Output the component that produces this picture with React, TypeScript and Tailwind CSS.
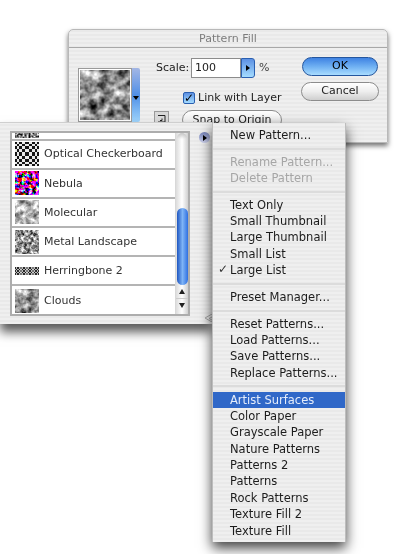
import React from "react";

const stripes = "bg-[repeating-linear-gradient(0deg,#efefef_0,#efefef_2px,#e9e9e9_2px,#e9e9e9_4px)]";

function Noise({ id, seed, freq, size = 24, dark = 0, bright = 1, color = false }: { id: string; seed: number; freq: number; size?: number; dark?: number; bright?: number; color?: boolean }) {
  const slope = bright - dark;
  const k = slope * 2.6;
  const o = dark - slope * 0.8;
  return (
    <svg width={size} height={size} className="block shrink-0">
      <filter id={id} x="0" y="0" width="100%" height="100%" colorInterpolationFilters="sRGB">
        <feTurbulence type="fractalNoise" baseFrequency={freq} numOctaves={3} seed={seed} />
        {color ? (
          <feColorMatrix type="matrix" values="5 0 0 0 -1.8  0 5 0 0 -2.5  0 0 5 0 -1.9  0 0 0 0 1" />
        ) : (
          <feColorMatrix type="matrix" values={`${k} 0 0 0 ${o} ${k} 0 0 0 ${o} ${k} 0 0 0 ${o} 0 0 0 0 1`} />
        )}
      </filter>
      <rect width={size} height={size} filter={`url(#${id})`} />
    </svg>
  );
}

function Checker() {
  const cells = [];
  const xs = [0, 2, 4, 7, 10, 14, 17, 20, 22, 24];
  for (let r = 0; r < 9; r++)
    for (let c = 0; c < 9; c++)
      if ((r + c) % 2 === 0)
        cells.push(<rect key={`${r}-${c}`} x={xs[c]} y={xs[r]} width={xs[c + 1] - xs[c]} height={xs[r + 1] - xs[r]} />);
  return (
    <svg width="24" height="24" className="block shrink-0 bg-[#e8e8e8]" fill="#151515">
      {cells}
    </svg>
  );
}

function Herring() {
  return (
    <svg width="24" height="24" className="block shrink-0">
      <defs>
        <pattern id="hb" width="3" height="3" patternUnits="userSpaceOnUse">
          <rect width="3" height="3" fill="#bbb" />
          <path d="M0 0L3 3M3 0L0 3" stroke="#1a1a1a" strokeWidth="0.9" />
        </pattern>
      </defs>
      <rect x="0" y="8" width="24" height="8" fill="url(#hb)" />
      <path d="M6 8V16M12 8V16M18 8V16" stroke="#eee" strokeWidth="0.8" />
    </svg>
  );
}

function Row({ thumb, label, last }: { thumb: React.ReactNode; label: string; last?: boolean }) {
  return (
    <div className={`flex h-[29.2px] shrink-0 items-center gap-[5px] pl-[3px] ${last ? "" : "border-b-2 border-[#b4b4b4]"}`}>
      {thumb}
      <span className="pt-[1px]">{label}</span>
    </div>
  );
}

function MenuItem({ label, disabled, checked, active }: { label: string; disabled?: boolean; checked?: boolean; active?: boolean }) {
  return (
    <div className={`relative flex h-[16.4px] items-center pl-[17px] pt-[1px] leading-none ${active ? "bg-[#3068c8] text-[#e4ecfa]" : disabled ? "text-[#a6a6a6]" : "text-[#1c1c1c]"}`}>
      {checked && <span className="absolute left-[5px] top-[1px] text-[12px] text-[#333]">✓</span>}
      {label}
    </div>
  );
}

function Sep() {
  return (
    <div className="flex h-[10.3px] items-center">
      <div className="h-[2px] w-full bg-[#dcdcdc]" />
    </div>
  );
}

export default function App() {
  return (
    <div className="relative h-[554px] w-[400px] overflow-hidden bg-white font-['DejaVu_Sans','Liberation_Sans',sans-serif] text-[11.5px] text-[#222] blur-[0.45px]">
      {/* Pattern Fill dialog */}
      <div className={`absolute left-[68px] top-[29px] h-[114px] w-[320px] rounded-t-[5px] border border-[#b8b8b8] text-[11px] ${stripes} shadow-[0_3px_5px_rgba(0,0,0,0.55)]`}>
        <div className="flex h-[18px] items-center justify-center border-b border-[#a8a8a8] pt-[1px] text-[#7c7c7c]">Pattern Fill</div>
        <div className="flex">
          <div className="ml-[9px] mt-[20px] flex h-[54px] items-stretch">
            <div className="border border-[#9a9a9a] bg-white p-[1px]">
              <Noise id="main" seed={8} freq={0.1} size={50} dark={0.25} bright={0.85} />
            </div>
            <div className="flex w-[8px] items-center justify-center rounded-r-[2px] bg-gradient-to-b from-[#a3b6e4] via-[#4f8fe6] to-[#9fd4fb]">
              <div className="mt-[6px] h-0 w-0 border-x-[3px] border-t-[4px] border-x-transparent border-t-black" />
            </div>
          </div>
          <div className="ml-[14px] mt-[10px] flex flex-col">
            <div className="flex h-[20px] items-center">
              <span className="ml-[2px] w-[35px]">Scale:</span>
              <div className="flex h-[20px] w-[50px] items-center border border-[#8c8c8c] bg-white pl-[3px]">100</div>
              <div className="flex h-[20px] w-[14px] items-center justify-center rounded-r-[3px] border border-[#2a5fb0] bg-gradient-to-b from-[#5d90e2] to-[#a5dcff]">
                <div className="h-0 w-0 border-y-[3px] border-l-[4px] border-y-transparent border-l-black" />
              </div>
              <span className="ml-[4px] text-[#444]">%</span>
            </div>
            <div className="ml-[29px] mt-[13px] flex h-[14px] items-center gap-[3px]">
              <div className="flex h-[12px] w-[12px] items-center justify-center rounded-[2px] border border-[#2a5fb0] bg-gradient-to-b from-[#5d90e2] to-[#a5dcff] text-[12px] font-bold leading-none text-black">✓</div>
              <span>Link with Layer</span>
            </div>
            <div className="mt-[2px] flex items-start">
              <div className="mt-[4px] flex h-[15px] w-[15px] items-center justify-center border border-[#999] bg-[#d8d8d8]">
                <svg width="9" height="9" viewBox="0 0 9 9" fill="none" stroke="#222" strokeWidth="1">
                  <path d="M1 1.5H8V8H1M5 4.5V6.5H3" />
                </svg>
              </div>
              <div className="ml-[13px] mt-[3px] flex h-[20px] w-[100px] items-center justify-center rounded-full border border-[#8c8c8c] bg-gradient-to-b from-white to-[#dcdcdc]">Snap to Origin</div>
            </div>
          </div>
          <div className="ml-[19px] mt-[9px] flex flex-col gap-[6px]">
            <div className="ml-[1px] flex h-[19px] w-[76px] items-center justify-center rounded-full border border-[#24569e] bg-gradient-to-b from-[#3f82e2] via-[#6fb0f2] to-[#a8dcff] text-black">OK</div>
            <div className="flex h-[19px] w-[78px] items-center justify-center rounded-full border border-[#8c8c8c] bg-gradient-to-b from-white via-[#eeeeee] to-[#cfcfcf]">Cancel</div>
          </div>
        </div>
      </div>

      {/* Pattern list palette */}
      <div className={`absolute left-0 top-[122px] flex h-[202px] w-[212px] items-start border-t border-[#cfcfcf] ${stripes} pl-[10px] pt-[8px] shadow-[0_8px_10px_rgba(0,0,0,0.65)]`}>
        <div className="flex h-[185px] w-[180px] border-2 border-[#adadad] bg-white text-[11px] text-[#333]">
          <div className="flex w-[165px] flex-col overflow-hidden">
            <div className="h-[7.5px] shrink-0 overflow-hidden border-b-2 border-[#b4b4b4]">
              <div className="-mt-[19px] pl-[3px]">
                <Noise id="t0" seed={3} freq={0.5} dark={0.1} bright={0.9} />
              </div>
            </div>
            <Row thumb={<Checker />} label="Optical Checkerboard" />
            <Row thumb={<Noise id="t1" seed={5} freq={0.28} color />} label="Nebula" />
            <Row thumb={<Noise id="t2" seed={11} freq={0.17} dark={0.45} bright={0.95} />} label="Molecular" />
            <Row thumb={<Noise id="t3" seed={21} freq={0.32} dark={0.25} bright={0.9} />} label="Metal Landscape" />
            <Row thumb={<Herring />} label="Herringbone 2" />
            <Row thumb={<Noise id="t4" seed={8} freq={0.15} dark={0.3} bright={0.85} />} label="Clouds" last />
          </div>
          <div className="flex w-[13px] flex-col border-l border-[#d8d8d8] bg-gradient-to-r from-[#dcdcdc] via-white to-[#d0d0d0]">
            <div className="h-[75px]">
              <div className="mx-[1px] h-[6px] rounded-t-full bg-gradient-to-b from-[#c4c4c4] to-transparent" />
            </div>
            <div className="mx-[0.5px] h-[77px] rounded-full bg-gradient-to-r from-[#1f55c0] via-[#7fb4f6] to-[#2f6fe0]" />
            <div className="flex h-[14px] items-center justify-center border-b border-[#ccc]">
              <div className="h-0 w-0 border-x-[3px] border-b-[5px] border-x-transparent border-b-[#222]" />
            </div>
            <div className="flex h-[13px] items-center justify-center">
              <div className="h-0 w-0 border-x-[3px] border-t-[5px] border-x-transparent border-t-[#222]" />
            </div>
          </div>
        </div>
        <div className="ml-[9px] mt-[1px] flex h-[11px] w-[11px] items-center justify-center rounded-full bg-gradient-to-b from-[#7683b8] to-[#d0d4ee]">
          <div className="h-0 w-0 border-y-[3px] border-l-[4px] border-y-transparent border-l-black" />
        </div>
        <svg className="absolute bottom-[2px] right-0" width="7" height="8" viewBox="0 0 7 8" fill="none" stroke="#a8a8a8">
          <path d="M7 0L0 4L7 8M7 3L4 4.5L7 6" />
        </svg>
      </div>

      {/* Flyout menu */}
      <div className={`absolute left-[212px] top-[123px] h-[419px] w-[134px] border-x border-[#bdbdbd] pt-[4px] ${stripes} shadow-[0_6px_12px_rgba(0,0,0,0.75)]`}>
        <MenuItem label="New Pattern..." />
        <Sep />
        <MenuItem label="Rename Pattern..." disabled />
        <MenuItem label="Delete Pattern" disabled />
        <Sep />
        <MenuItem label="Text Only" />
        <MenuItem label="Small Thumbnail" />
        <MenuItem label="Large Thumbnail" />
        <MenuItem label="Small List" />
        <MenuItem label="Large List" checked />
        <Sep />
        <MenuItem label="Preset Manager..." />
        <Sep />
        <MenuItem label="Reset Patterns..." />
        <MenuItem label="Load Patterns..." />
        <MenuItem label="Save Patterns..." />
        <MenuItem label="Replace Patterns..." />
        <Sep />
        <MenuItem label="Artist Surfaces" active />
        <MenuItem label="Color Paper" />
        <MenuItem label="Grayscale Paper" />
        <MenuItem label="Nature Patterns" />
        <MenuItem label="Patterns 2" />
        <MenuItem label="Patterns" />
        <MenuItem label="Rock Patterns" />
        <MenuItem label="Texture Fill 2" />
        <MenuItem label="Texture Fill" />
      </div>
    </div>
  );
}
